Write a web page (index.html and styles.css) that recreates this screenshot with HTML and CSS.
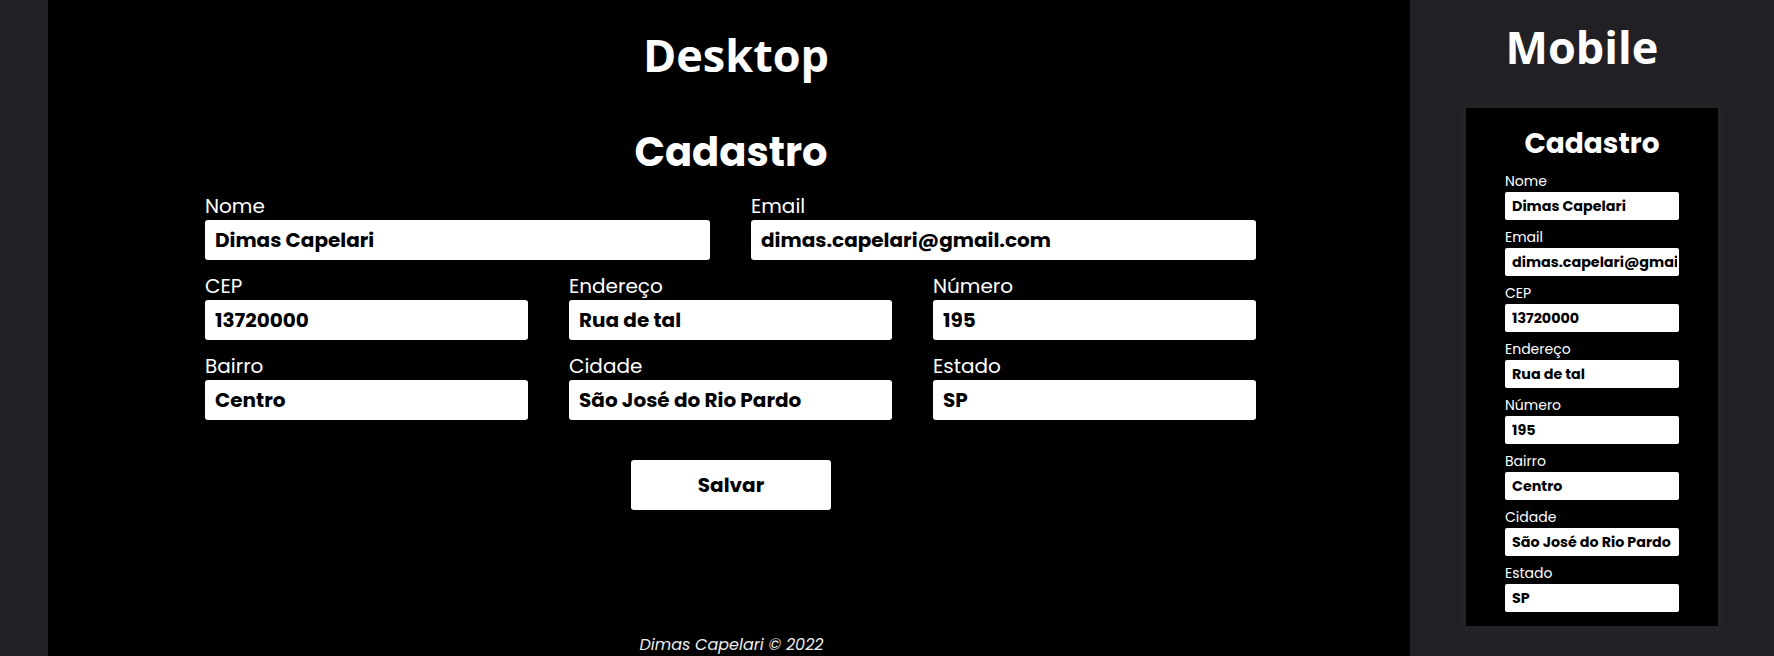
FILE: index.html
```html
<!DOCTYPE html>
<html lang="pt-BR">
<head>
<meta charset="utf-8">
<title>Cadastro</title>
<link rel="stylesheet" href="styles.css">
</head>
<body>
<div class="page">
  <div class="strip"></div>
  <main class="desktop">
    <h1 class="view-title desktop-title">Desktop</h1>
    <h2 class="form-title">Cadastro</h2>
    <form class="form">
      <div class="row two">
        <div class="field"><label>Nome</label><input type="text" value="Dimas Capelari" readonly></div>
        <div class="field"><label>Email</label><input type="text" value="dimas.capelari@gmail.com" readonly></div>
      </div>
      <div class="row three">
        <div class="field"><label>CEP</label><input type="text" value="13720000" readonly></div>
        <div class="field"><label>Endereço</label><input type="text" value="Rua de tal" readonly></div>
        <div class="field"><label>Número</label><input type="text" value="195" readonly></div>
      </div>
      <div class="row three">
        <div class="field"><label>Bairro</label><input type="text" value="Centro" readonly></div>
        <div class="field"><label>Cidade</label><input type="text" value="São José do Rio Pardo" readonly></div>
        <div class="field"><label>Estado</label><input type="text" value="SP" readonly></div>
      </div>
      <div class="actions"><button type="button" class="save">Salvar</button></div>
    </form>
    <footer class="footer">Dimas Capelari © 2022</footer>
  </main>
  <aside class="mobile">
    <h1 class="view-title mobile-title">Mobile</h1>
    <div class="phone">
      <h2 class="phone-title">Cadastro</h2>
      <div class="phone-fields">
        <div class="pfield"><label>Nome</label><input type="text" value="Dimas Capelari" readonly></div>
        <div class="pfield"><label>Email</label><input type="text" value="dimas.capelari@gmail.com" readonly></div>
        <div class="pfield"><label>CEP</label><input type="text" value="13720000" readonly></div>
        <div class="pfield"><label>Endereço</label><input type="text" value="Rua de tal" readonly></div>
        <div class="pfield"><label>Número</label><input type="text" value="195" readonly></div>
        <div class="pfield"><label>Bairro</label><input type="text" value="Centro" readonly></div>
        <div class="pfield"><label>Cidade</label><input type="text" value="São José do Rio Pardo" readonly></div>
        <div class="pfield"><label>Estado</label><input type="text" value="SP" readonly></div>
      </div>
    </div>
  </aside>
</div>
</body>
</html>
```
FILE: styles.css
```css
* { box-sizing: border-box; }
html, body {
  margin: 0;
  padding: 0;
  background: #212125;
  height: 656px;
  overflow: hidden;
}
.page {
  display: flex;
  width: 1774px;
  height: 656px;
}
.strip {
  width: 48px;
  flex: none;
  background: #212125;
}
.desktop {
  width: 1362px;
  flex: none;
  background: #000;
  display: flex;
  flex-direction: column;
  align-items: center;
  color: #fff;
}
.view-title {
  margin: 0;
  font-family: "Open Sans", "Liberation Sans", sans-serif;
  font-weight: 700;
  font-size: 45px;
  line-height: 50px;
  color: #fff;
}
.desktop-title {
  margin-top: 30px;
  padding-left: 14px;
}
.form-title {
  margin: 52px 0 0;
  padding-left: 4px;
  font-family: "Poppins", "DejaVu Sans", sans-serif;
  font-weight: 700;
  font-size: 40px;
  line-height: 40px;
}
.form {
  width: 1051px;
  margin-top: 20px;
  display: flex;
  flex-direction: column;
  row-gap: 12px;
  margin-left: 3px;
}
.row {
  display: grid;
  column-gap: 41px;
}
.row.two { grid-template-columns: 1fr 1fr; }
.row.three { grid-template-columns: 1fr 1fr 1fr; }
.field { display: flex; flex-direction: column; }
.field label {
  font-family: "Poppins", "DejaVu Sans", sans-serif;
  font-size: 20px;
  line-height: 28px;
  color: #fff;
}
.field input {
  display: block;
  width: 100%;
  height: 40px;
  border: none;
  border-radius: 3px;
  background: #fff;
  padding: 0 10px;
  font-family: "Poppins", "DejaVu Sans", sans-serif;
  font-weight: 700;
  font-size: 20px;
  color: #000;
  outline: none;
}
.actions {
  display: flex;
  justify-content: center;
  margin-top: 28px;
}
.save {
  width: 200px;
  height: 50px;
  border: none;
  border-radius: 3px;
  background: #fff;
  color: #000;
  font-family: "Poppins", "DejaVu Sans", sans-serif;
  font-weight: 700;
  font-size: 20px;
  margin-left: 1px;
}
.footer {
  margin-top: 125px;
  font-family: "Poppins", "DejaVu Sans", sans-serif;
  font-style: italic;
  font-size: 16px;
  line-height: 20px;
  color: #eee;
  padding-left: 5px;
}
.mobile {
  width: 364px;
  flex: none;
  background: #212125;
  display: flex;
  flex-direction: column;
  align-items: center;
}
.mobile-title {
  margin-top: 22px;
  padding-right: 20px;
}
.phone {
  margin-top: 36px;
  width: 252px;
  background: #000;
  padding: 20px 0 14px;
  display: flex;
  flex-direction: column;
  align-items: center;
  box-shadow: 0 0 10px 5px rgba(255, 255, 255, 0.02);
  color: #fff;
}
.phone-title {
  margin: 0;
  font-family: "Poppins", "DejaVu Sans", sans-serif;
  font-weight: 700;
  font-size: 28px;
  line-height: 32px;
}
.phone-fields {
  margin-top: 11px;
  width: 174px;
  display: flex;
  flex-direction: column;
  row-gap: 7px;
}
.pfield { display: flex; flex-direction: column; }
.pfield label {
  font-family: "Poppins", "DejaVu Sans", sans-serif;
  font-size: 14px;
  line-height: 21px;
}
.pfield input {
  display: block;
  width: 100%;
  height: 28px;
  border: none;
  border-radius: 2px;
  background: #fff;
  padding: 0 2px 0 7px;
  font-family: "Poppins", "DejaVu Sans", sans-serif;
  font-weight: 700;
  font-size: 14.3px;
  color: #000;
  outline: none;
}
```
